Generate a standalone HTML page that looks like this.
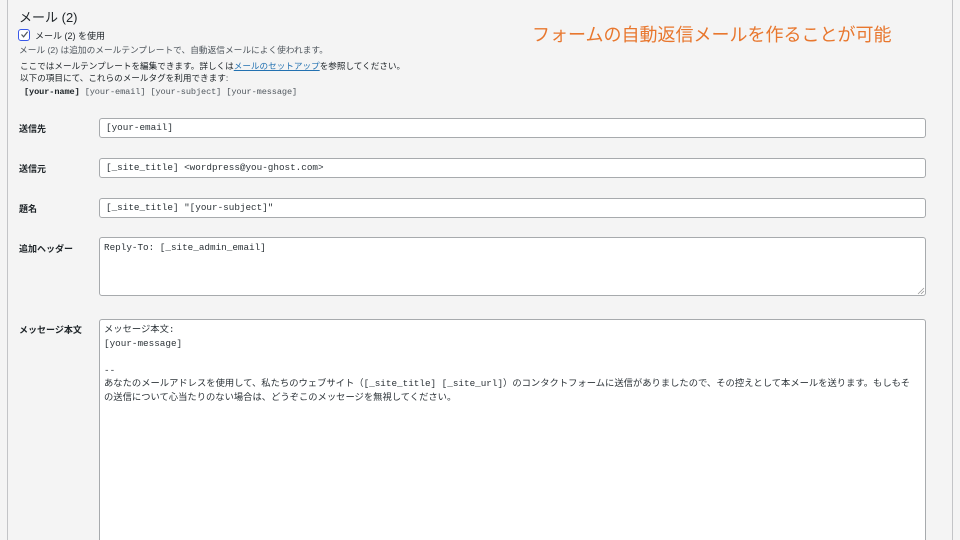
<!DOCTYPE html>
<html><head><meta charset="utf-8"><style>
*{box-sizing:border-box;margin:0;padding:0}
html,body{width:960px;height:540px;overflow:hidden}
body{background:#f4f4f4;font-family:"Liberation Sans","Noto Sans CJK JP",sans-serif;color:#1d2327;position:relative}
.panel{position:absolute;left:7px;top:-2px;width:946px;height:560px;border-left:1px solid #c3c4c7;border-right:1px solid #c3c4c7;background:#f4f4f4}
.a{position:absolute;white-space:nowrap}
.h{left:19px;top:7px;font-size:13px;color:#1d2327}
.cb{left:18px;top:29px;width:12px;height:12px;border:1.5px solid #3858e9;border-radius:3px;background:#fff}
.cb svg{position:absolute;left:1px;top:0}
.s{font-size:8.5px;color:#50575e}
.lbl{left:19px;font-size:9px;font-weight:bold;color:#1d2327}
.in{position:absolute;left:99px;width:827px;background:#fff;border:1px solid #a7aaad;border-radius:3px;font-family:"Liberation Mono","Noto Sans CJK JP",monospace;font-size:9.3px;color:#2c3338;padding:0 6px;white-space:pre}
.orange{left:532px;top:21px;font-size:18px;color:#e8772e}
a{color:#2271b1;text-decoration:underline}
</style></head><body>
<div class="panel"></div>
<div class="a h">メール (2)</div>
<div class="a cb"><svg width="9" height="9" viewBox="0 0 9 9"><path d="M1.5 4.5 L3.6 6.8 L7.6 1.8" stroke="#50575e" stroke-width="1.2" fill="none"/></svg></div>
<div class="a" style="left:35px;top:29px;font-size:9px;color:#1d2327">メール (2) を使用</div>
<div class="a s" style="left:19px;top:43px;font-size:8.7px">メール (2) は追加のメールテンプレートで、自動返信メールによく使われます。</div>
<div class="a" style="left:20px;top:60px;font-size:8.6px;color:#1d2327">ここではメールテンプレートを編集できます。詳しくは<a>メールのセットアップ</a>を参照してください。</div>
<div class="a" style="left:20px;top:72px;font-size:8.6px;color:#1d2327">以下の項目にて、これらのメールタグを利用できます:</div>
<div class="a" style="left:24px;top:87px;font-size:8.6px;color:#50575e;font-family:'Liberation Mono',monospace;letter-spacing:-0.1px"><b style="color:#1d2327">[your-name]</b> [your-email] [your-subject] [your-message]</div>
<div class="a orange">フォームの自動返信メールを作ることが可能</div>

<div class="a lbl" style="top:122px">送信先</div>
<div class="in" style="top:118px;height:20px;line-height:18px">[your-email]</div>
<div class="a lbl" style="top:162px">送信元</div>
<div class="in" style="top:158px;height:20px;line-height:18px">[_site_title] &lt;wordpress@you-ghost.com&gt;</div>
<div class="a lbl" style="top:202px">題名</div>
<div class="in" style="top:198px;height:20px;line-height:18px">[_site_title] "[your-subject]"</div>
<div class="a lbl" style="top:242px">追加ヘッダー</div>
<div class="in" style="top:237px;height:59px;padding-top:3px;padding-left:4px;line-height:13px">Reply-To: [_site_admin_email]</div>
<div class="a lbl" style="top:323px">メッセージ本文</div>
<div class="in" style="top:319px;height:240px;padding-top:3px;line-height:13.5px;font-size:9.3px;padding-left:4px">メッセージ本文:
[your-message]

--
あなたのメールアドレスを使用して、私たちのウェブサイト（[_site_title] [_site_url]）のコンタクトフォームに送信がありましたので、その控えとして本メールを送ります。もしもそ
の送信について心当たりのない場合は、どうぞこのメッセージを無視してください。</div>
<svg class="a" style="left:917px;top:287px" width="8" height="8"><path d="M1 7L7 1M4 7L7 4" stroke="#999" stroke-width="0.8"/></svg>
</body></html>
